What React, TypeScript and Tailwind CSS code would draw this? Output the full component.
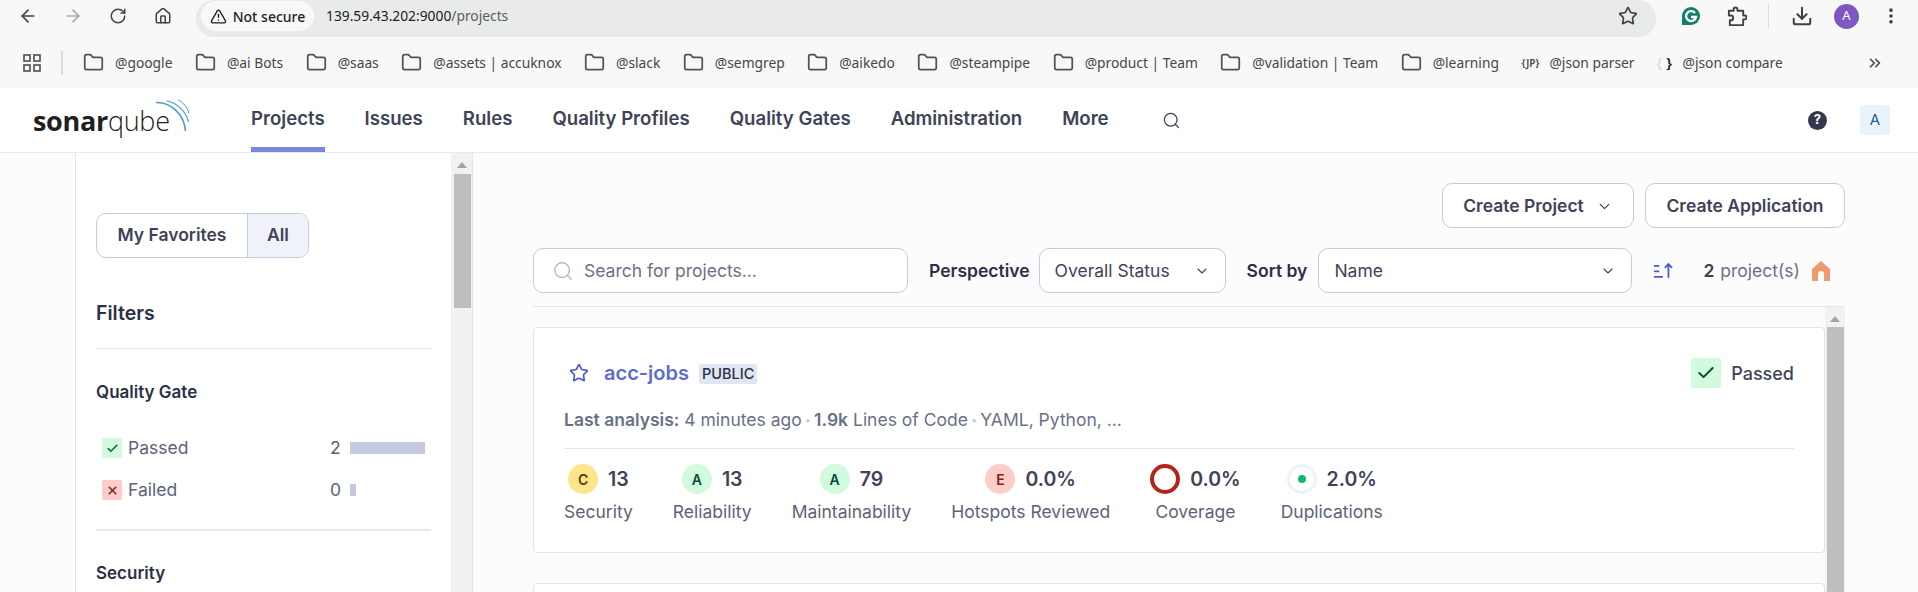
import React from "react";
import { ArrowLeft, ArrowRight, RotateCw, Home, TriangleAlert, Star, Download, EllipsisVertical, ChevronsRight, Search, ChevronDown, Check, X, Folder } from "lucide-react";

const bookmarks = ["@google", "@ai Bots", "@saas", "@assets | accuknox", "@slack", "@semgrep", "@aikedo", "@steampipe", "@product | Team", "@validation | Team", "@learning"];
const navs = ["Projects", "Issues", "Rules", "Quality Profiles", "Quality Gates", "Administration", "More"];

function Rating({ l, cls }: { l: string; cls: string }) {
  return <span className={`flex h-[30px] w-[30px] items-center justify-center rounded-full text-[14px] font-semibold ${cls}`}>{l}</span>;
}

function Measure({ icon, value, label }: { icon: React.ReactNode; value: string; label: string }) {
  return (
    <div className="flex flex-col items-center">
      <div className="flex h-[30px] items-center gap-[10px]">
        {icon}
        <span className="pt-px text-[19.5px] font-semibold text-[#3e4357]">{value}</span>
      </div>
      <span className="mt-[6px] text-[17.5px] leading-[24px] text-[#5c6378]">{label}</span>
    </div>
  );
}

function ScrollArrow() {
  return <div className="h-0 w-0 border-x-[5px] border-b-[6px] border-x-transparent border-b-[#a3a3a3]" />;
}

export default function App() {
  return (
    <div className="flex h-[592px] w-[1918px] flex-col overflow-hidden bg-[#fcfcfd] font-['Inter',sans-serif]">
      {/* browser toolbar */}
      <div className="flex h-[37px] items-center bg-[#f8f8f8] text-[#3f4245]">
        <div className="mb-[5px] flex w-[196px] shrink-0 items-center pl-[18px]">
          <ArrowLeft size={20} strokeWidth={2} />
          <ArrowRight size={20} strokeWidth={2} className="ml-[25px] text-[#a8aaac]" />
          <RotateCw size={18} strokeWidth={2} className="ml-[26px]" />
          <Home size={18} strokeWidth={2} className="ml-[27px]" />
        </div>
        <div className="flex h-[37px] w-[1460px] shrink-0 items-center rounded-r-[18px] rounded-l-[18px] bg-[#e9ebeb] pb-[5px] pl-[5px] pr-[18px] font-['Noto_Sans',sans-serif]">
          <div className="flex h-[30px] w-[113px] items-center justify-center gap-[6px] rounded-full bg-[#f8f8f8] text-[14px] font-medium text-[#1f2124]">
            <TriangleAlert size={17} />
            <span>Not secure</span>
          </div>
          <span className="ml-[12px] text-[13.8px] text-[#202124]">139.59.43.202:9000<span className="text-[#5a5e62]">/projects</span></span>
          <Star size={20} strokeWidth={2} className="ml-auto text-[#3f4245]" />
        </div>
        <div className="mb-[5px] flex items-center">
          <svg viewBox="0 0 20 20" className="ml-[25px] h-[20px] w-[20px] shrink-0"><path d="M1 10a9 9 0 1 1 9 9H1z" fill="#0f7f68" /><path d="M14 7a5 5 0 1 0 1 4h-5" fill="none" stroke="#fff" strokeWidth="2.4" /></svg>
          <svg viewBox="0 0 22 22" className="ml-[25px] h-[21px] w-[21px] shrink-0" fill="none" stroke="#3f4245" strokeWidth="2" strokeLinejoin="round">
            <path d="M3 5h5V3.500a2 2 0 0 1 4 0V5h6v5h1.500a2 2 0 0 1 0 4H18v6H4v-5h1a2.500 2.500 0 0 0 0-5H3z" />
          </svg>
          <div className="ml-[21px] h-[24px] w-px shrink-0 bg-[#d3e0e6]" />
          <Download size={22} strokeWidth={2.2} className="ml-[22px] shrink-0" />
          <div className="ml-[21px] flex h-[25px] w-[25px] shrink-0 items-center justify-center rounded-full bg-[#7e57c2] font-['Noto_Sans',sans-serif] text-[13px] text-white">A</div>
          <EllipsisVertical size={20} strokeWidth={2.4} className="ml-[22px] shrink-0" />
        </div>
      </div>

      {/* bookmarks */}
      <div className="flex h-[51px] items-center whitespace-nowrap bg-[#f8f8f8] pl-[23px] font-['Noto_Sans',sans-serif] text-[13.8px] text-[#44474a]">
        <svg viewBox="0 0 18 18" className="h-[18px] w-[18px]" fill="none" stroke="#55585b" strokeWidth="1.7">
          <rect x="1" y="1" width="6" height="6" /><rect x="11" y="1" width="6" height="6" /><rect x="1" y="11" width="6" height="6" /><rect x="11" y="11" width="6" height="6" />
        </svg>
        <div className="ml-[20px] mr-[20px] h-[24px] w-[2px] bg-[#d3e0e6]" />
        {bookmarks.map((b) => (
          <div key={b} className="mr-[22.500px] flex items-center gap-[11px]">
            <Folder size={21} strokeWidth={2} className="text-[#505356]" />
            <span className="pt-px">{b}</span>
          </div>
        ))}
        <div className="mr-[22px] flex items-center gap-[9px]">
          <span className="w-[19px] text-[10px] font-semibold leading-none">{"{JP}"}</span>
          <span className="pt-px">@json parser</span>
        </div>
        <div className="flex items-center gap-[11px]">
          <span className="w-[15px] whitespace-nowrap text-right text-[15px] font-semibold leading-none text-[#222]"><span className="text-[#ddd]">{"{"}</span>{" }"}</span>
          <span className="pt-px">@json compare</span>
        </div>
        <ChevronsRight size={18} strokeWidth={2} className="ml-[83px] text-[#3f4245]" />
      </div>

      {/* sonar header */}
      <header className="flex h-[65px] items-stretch border-b-[1px] border-[#e8e9ec] bg-white pl-[33px] pr-[28px] text-[#3e4357]">
        <div className="relative w-[218px]">
          <span className="absolute left-0 top-[16px] font-['Open_Sans',sans-serif] text-[27px] leading-[34px] tracking-[-0.3px] text-[#231f20]">
            <span className="font-bold">sonar</span>
            <span className="font-light">qube</span>
          </span>
          <svg viewBox="0 0 36 34" className="absolute left-[122px] top-[11px] h-[34px] w-[36px]" fill="none" stroke="#4f9bd2">
            <path d="M1 3.500C15 3 29 14 30.500 32" strokeWidth="1.6" />
            <path d="M12 2c10 2 19 10 21.500 21" strokeWidth="1.2" />
            <path d="M23 1c5 2 9 7 11 13" strokeWidth="1" />
          </svg>
        </div>
        <nav className="flex items-stretch gap-[40px] whitespace-nowrap text-[18.6px] font-semibold">
          {navs.map((n, i) => (
            <div key={n} className={`flex items-center justify-center ${i === 0 ? "border-b-[5px] border-[#7b87d9] pt-[3px]" : "pb-[2px]"}`}>{n}</div>
          ))}
          <div className="ml-[13px] flex items-center">
            <Search size={19} strokeWidth={1.6} />
          </div>
        </nav>
        <div className="ml-auto flex items-center gap-[33px]">
          <div className="flex h-[19px] w-[19px] items-center justify-center rounded-full bg-[#33384f] text-[13px] font-bold text-white">?</div>
          <div className="flex h-[30px] w-[30px] items-center justify-center rounded-[3px] bg-[#e8f3fb] text-[15px] text-[#2f5d87]">A</div>
        </div>
      </header>

      <div className="flex min-h-0 flex-1">
        {/* sidebar */}
        <aside className="ml-[75px] flex w-[398px] shrink-0 border-x border-[#e3e6f0] bg-white">
          <div className="w-[375px] pl-[20px] pr-[20px] pt-[60px] text-[#2c3046]">
            <div className="flex h-[45px] w-[213px] overflow-hidden rounded-[10px] border border-[#c5cbdf] text-[17.500px] font-semibold text-[#3e4357]">
              <div className="flex w-[150px] items-center justify-center">My Favorites</div>
              <div className="flex flex-1 items-center justify-center border-l border-[#c5cbdf] bg-[#eff2f9]">All</div>
            </div>
            <h2 className="mt-[42px] text-[19.5px] font-semibold leading-[26px]">Filters</h2>
            <div className="mt-[22px] h-px bg-[#e8e9ec]" />
            <h3 className="mt-[31px] text-[17px] font-semibold leading-[24px]">Quality Gate</h3>
            <div className="mt-[34px] flex items-center pl-[6px] text-[17.5px] leading-[20px] text-[#5c6378]">
              <span className="flex h-[20px] w-[20px] items-center justify-center rounded-[2px] bg-[#d1fadf] text-[#0b6b3a]"><Check size={13} strokeWidth={3} /></span>
              <span className="ml-[6px] w-[202px]">Passed</span>
              <span className="w-[10px] text-right">2</span>
              <span className="ml-[10px] h-[12px] w-[75px] bg-[#c5cbdf]" />
            </div>
            <div className="mt-[22px] flex items-center pl-[6px] text-[17.5px] leading-[20px] text-[#5c6378]">
              <span className="flex h-[20px] w-[20px] items-center justify-center rounded-[2px] bg-[#fecdca] text-[#912018]"><X size={13} strokeWidth={3} /></span>
              <span className="ml-[6px] w-[202px]">Failed</span>
              <span className="w-[10px] text-right">0</span>
              <span className="ml-[10px] h-[12px] w-[6px] bg-[#c5cbdf]" />
            </div>
            <div className="mt-[29px] h-[2px] bg-[#e8e9ec]" />
            <h3 className="mt-[30px] text-[17px] font-semibold leading-[24px]">Security</h3>
          </div>
          <div className="flex w-[21px] flex-col items-center border-l border-[#f1f1f1] bg-[#f1f1f1]">
            <div className="pt-[9px]"><ScrollArrow /></div>
            <div className="mt-[6px] h-[134px] w-[17px] bg-[#bebebe]" />
          </div>
        </aside>

        {/* main */}
        <main className="min-w-0 flex-1 pl-[60px] pr-[73px] pt-[30px]">
          <div className="flex justify-end gap-[11px]">
            <button className="flex h-[45px] w-[192px] items-center justify-center gap-[12px] rounded-[10px] border border-[#c5cbdf] bg-white pt-px text-[17.5px] font-semibold text-[#3e4357]">
              Create Project <ChevronDown size={17} strokeWidth={1.8} />
            </button>
            <button className="flex h-[45px] w-[200px] items-center justify-center rounded-[10px] border border-[#c5cbdf] bg-white pt-px text-[17.5px] font-semibold text-[#3e4357]">Create Application</button>
          </div>
          <div className="mt-[20px] flex h-[45px] items-center">
            <div className="flex h-[45px] w-[375px] items-center rounded-[10px] border border-[#c5cbdf] bg-white pl-[18px] pt-px text-[17.5px] text-[#6a7187]">
              <Search size={22} strokeWidth={1.6} className="text-[#b4bbd0]" />
              <span className="ml-[10px]">Search for projects...</span>
            </div>
            <span className="ml-[21px] pt-px text-[17.5px] font-semibold text-[#2c3046]">Perspective</span>
            <div className="ml-[9px] flex h-[45px] w-[187px] items-center justify-between rounded-[10px] border border-[#c5cbdf] bg-white pl-[15px] pr-[15px] pt-px text-[17.5px] text-[#3e4357]">
              Overall Status <ChevronDown size={16} strokeWidth={1.6} />
            </div>
            <span className="ml-[21px] pt-px text-[17.5px] font-semibold text-[#2c3046]">Sort by</span>
            <div className="ml-[11px] flex h-[45px] w-[314px] items-center justify-between rounded-[10px] border border-[#c5cbdf] bg-white pl-[15px] pr-[15px] pt-px text-[17.5px] text-[#3e4357]">
              Name <ChevronDown size={16} strokeWidth={1.6} />
            </div>
            <svg viewBox="0 0 22 18" className="ml-[21px] h-[17px] w-[20px]" fill="none" stroke="#4b5dc2" strokeWidth="2">
              <path d="M1 4h6M1 10h6M1 16h10M17 17V2M13 6l4-4 4 4" />
            </svg>
            <span className="ml-[30px] pt-px text-[17.5px] font-semibold text-[#3e4357]">2</span>
            <span className="ml-[6px] pt-px text-[17.5px] text-[#6a7187]">project(s)</span>
            <svg viewBox="0 0 18 20" className="ml-[12px] h-[20px] w-[18px]"><path d="M9 0l9 8v12h-6v-7a3 3 0 0 0-6 0v7H0V8z" fill="#ef9a6c" /></svg>
          </div>
          <div className="mt-[13px] flex h-[300px] border-t border-[#e3e6f0]">
            <div className="min-w-0 flex-1 pt-[20px]">
              <section className="h-[226px] rounded-[4px] border border-[#e3e6f0] bg-white px-[30px]">
                <div className="flex h-[79px] items-center pt-[11px]">
                  <Star size={20} strokeWidth={2} className="ml-[5px] text-[#4b5dc2]" />
                  <span className="ml-[15px] text-[20px] font-semibold text-[#5d6cd0]">acc-jobs</span>
                  <span className="ml-[10px] mt-px flex h-[20px] items-center rounded-[2px] bg-[#e1e6f3] px-[3px] text-[14.5px] font-medium text-[#2c3046]">PUBLIC</span>
                  <span className="ml-auto flex h-[30px] w-[30px] items-center justify-center rounded-[2px] bg-[#d1fadf] text-[#054f31]"><Check size={20} strokeWidth={2.4} /></span>
                  <span className="ml-[10px] text-[18px] font-medium text-[#3e4357]">Passed</span>
                </div>
                <div className="flex h-[24px] items-center whitespace-pre pt-px text-[17.5px] leading-[24px] text-[#6a7187]">
                  <span className="font-semibold">Last analysis:</span> 4 minutes ago<span className="text-[11px] text-[#c5cbdf]"> • </span><span className="font-semibold">1.9k</span> Lines of Code<span className="text-[11px] text-[#c5cbdf]"> • </span>YAML, Python, ...
                </div>
                <div className="mt-[17px] h-px bg-[#e3e6f0]" />
                <div className="mt-[15px] flex gap-[40px]">
                  <Measure label="Security" value="13" icon={<Rating l="C" cls="bg-[#fde68a] text-[#5a3d05]" />} />
                  <Measure label="Reliability" value="13" icon={<Rating l="A" cls="bg-[#d1fadf] text-[#054f31]" />} />
                  <Measure label="Maintainability" value="79" icon={<Rating l="A" cls="bg-[#d1fadf] text-[#054f31]" />} />
                  <Measure label="Hotspots Reviewed" value="0.0%" icon={<Rating l="E" cls="bg-[#fecdca] text-[#7a271a]" />} />
                  <Measure label="Coverage" value="0.0%" icon={<span className="h-[30px] w-[30px] rounded-full border-[4px] border-[#b42318]" />} />
                  <Measure label="Duplications" value="2.0%" icon={<span className="flex h-[30px] w-[30px] items-center justify-center rounded-full border-[3px] border-[#eff2f9]"><span className="h-[8px] w-[8px] rounded-full bg-[#12b76a]" /></span>} />
                </div>
              </section>
              <section className="mt-[30px] h-[60px] rounded-[4px] border border-[#e3e6f0] bg-white" />
            </div>
            <div className="flex w-[20px] flex-col items-center bg-[#f1f1f1]">
              <div className="pt-[9px]"><ScrollArrow /></div>
              <div className="mt-[5px] h-[280px] w-[17px] bg-[#bebebe]" />
            </div>
          </div>
        </main>
      </div>
    </div>
  );
}
